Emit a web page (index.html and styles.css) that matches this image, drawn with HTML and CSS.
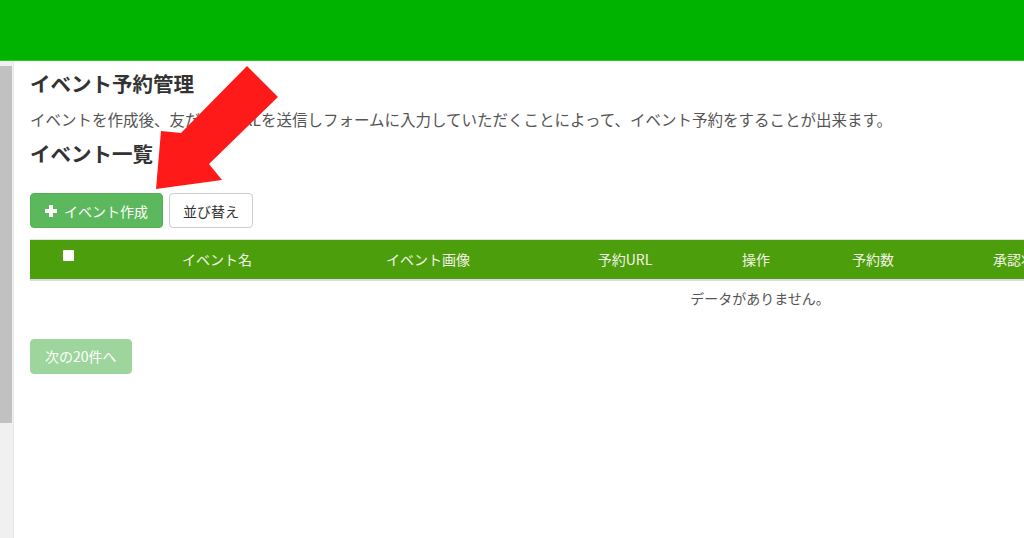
FILE: index.html
```html
<!DOCTYPE html>
<html>
<head>
<meta charset="utf-8">
<link rel="stylesheet" href="styles.css">
</head>
<body>
<div class="topbar"></div>
<div class="layout">
    <div class="side"><div class="side-thumb"></div></div>
    <div class="main">
        <h1 class="page-title">イベント予約管理</h1>
        <p class="lead">イベントを作成後、友だちにURLを送信しフォームに入力していただくことによって、イベント予約をすることが出来ます。</p>
        <h2 class="page-title">イベント一覧</h2>
        <div class="toolbar">
            <button class="btn btn-green"><span class="plus"></span>イベント作成</button>
            <button class="btn btn-white">並び替え</button>
        </div>
        <div class="table-wrap">
            <table class="events">
                <colgroup>
                    <col style="width:76px">
                    <col style="width:222px">
                    <col style="width:200px">
                    <col style="width:194px">
                    <col style="width:68px">
                    <col style="width:166px">
                    <col style="width:130px">
                    <col>
                </colgroup>
                <thead>
                    <tr>
                        <th><span class="check"></span></th>
                        <th>イベント名</th>
                        <th>イベント画像</th>
                        <th>予約URL</th>
                        <th>操作</th>
                        <th>予約数</th>
                        <th>承認状態</th>
                        <th>作成日</th>
                    </tr>
                </thead>
                <tbody>
                    <tr><td colspan="8" class="empty">データがありません。</td></tr>
                </tbody>
            </table>
        </div>
        <button class="btn btn-green btn-disabled">次の20件へ</button>
    </div>
</div>

<svg class="arrow" width="300" height="200" viewBox="0 0 300 200">
    <polygon points="247,66 278,97 209,164 222,180 156,189 161,131 181,133" fill="#ff1a1a"/>
</svg>
</body>
</html>
```

FILE: styles.css
```css
* {
    margin: 0;
    padding: 0;
    box-sizing: border-box;
}

html, body {
    height: 100%;
    overflow: hidden;
}

body {
    background: white;
    font-family: "Noto Sans CJK JP", "Noto Sans", sans-serif;
    color: #333;
}

.topbar {
    height: 61px;
    background: #00b300;
    border-bottom: 1px solid #33c433;
}

.layout {
    display: flex;
    height: calc(100% - 61px);
}

.side {
    width: 14px;
    flex-shrink: 0;
    background: #f0f0f0;
    border-right: 1px solid #e8e8e8;
    padding-top: 5px;
}

.side-thumb {
    width: 12px;
    height: 357px;
    background: #c1c1c1;
}

.main {
    flex: 1;
    min-width: 0;
    padding: 8px 0 0 16px;
}

.page-title {
    font-size: 20.5px;
    line-height: 28px;
    font-weight: bold;
    color: #333;
}

.lead {
    margin-top: 11px;
    font-size: 15.5px;
    line-height: 22px;
    color: #555;
}

h2.page-title {
    margin-top: 9px;
}

.toolbar {
    display: flex;
    gap: 6px;
    margin-top: 26px;
}

.btn {
    height: 35px;
    padding: 0 14px;
    border-radius: 4px;
    font-family: inherit;
    font-size: 14px;
    display: flex;
    align-items: center;
    cursor: pointer;
}

.btn-green {
    background: #5cb85c;
    border: 1px solid #55b055;
    color: white;
}

.btn-white {
    background: white;
    border: 1px solid #ccc;
    color: #333;
    padding: 0 13px;
}

.plus {
    position: relative;
    width: 12px;
    height: 12px;
    margin-right: 7px;
}

.plus::before, .plus::after {
    content: "";
    position: absolute;
    background: white;
}

.plus::before {
    left: 4px;
    top: 0;
    width: 4px;
    height: 12px;
}

.plus::after {
    left: 0;
    top: 4px;
    width: 12px;
    height: 4px;
}

.table-wrap {
    margin-top: 11px;
    width: 1460px;
}

.events {
    width: 100%;
    table-layout: fixed;
    border-collapse: collapse;
}

.events th {
    height: 40px;
    background: #4c9e0c;
    color: #f4f4e6;
    font-size: 14px;
    font-weight: normal;
    text-align: center;
    border-top: 1px solid #e2e2e2;
    border-bottom: 2px solid #dcdcdc;
    white-space: nowrap;
}

.check {
    display: inline-block;
    width: 11px;
    height: 11px;
    background: white;
    border-radius: 1px;
    vertical-align: 4px;
    margin-left: 1px;
}

.events td {
    font-size: 14px;
    color: #555;
    text-align: center;
    padding: 6px 0 9px;
    line-height: 22px;
}

.btn-disabled {
    margin-top: 21px;
    padding: 0 14px;
    background: #9dd59d;
    border-color: #9dd59d;
    cursor: default;
}

.arrow {
    position: absolute;
    left: 0;
    top: 0;
}
```
